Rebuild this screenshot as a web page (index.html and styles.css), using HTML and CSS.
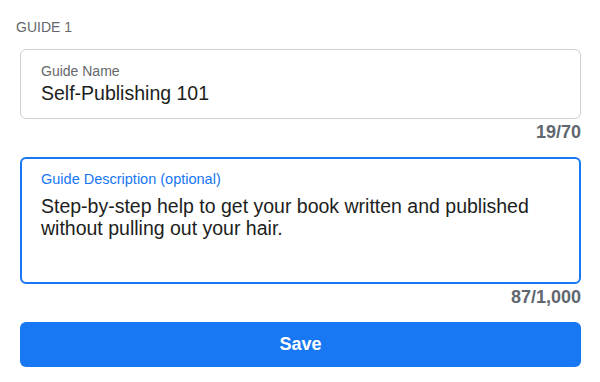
FILE: index.html
```html
<!DOCTYPE html>
<html lang="en">
<head>
    <meta charset="UTF-8">
    <title>Guide 1</title>
    <link rel="stylesheet" href="styles.css">
</head>
<body>
    <div class="guide">
        <h2 class="guide-heading">GUIDE 1</h2>

        <div class="field">
            <label class="field-box">
                <span class="field-label">Guide Name</span>
                <span class="field-value">Self-Publishing 101</span>
            </label>
            <div class="field-count">19/70</div>
        </div>

        <div class="field">
            <label class="field-box field-box-active field-box-tall">
                <span class="field-label">Guide Description (optional)</span>
                <span class="field-value">Step-by-step help to get your book written and published without pulling out your hair.</span>
            </label>
            <div class="field-count">87/1,000</div>
        </div>

        <button class="save-btn">Save</button>
    </div>
</body>
</html>
```

FILE: styles.css
```css
body {
    margin: 0;
    background: #fff;
    font-family: 'Liberation Sans', Arial, sans-serif;
    color: #1c1e21;
}

.guide {
    padding: 19px 19px 0 20px;
}

.guide-heading {
    margin: 0 0 14px -4px;
    font-size: 14px;
    font-weight: normal;
    line-height: 16px;
    color: #65676b;
}

.field {
    margin-bottom: 15px;
}

.field-box {
    display: flex;
    flex-direction: column;
    box-sizing: border-box;
    height: 70px;
    padding: 13px 20px 0;
    border: 1px solid #ccd0d5;
    border-radius: 6px;
}

.field-box-active {
    border: 2px solid #1877f2;
    padding: 12px 19px 0;
}

.field-box-tall {
    height: 127px;
}

.field-label {
    font-size: 14px;
    line-height: 16px;
    color: #65676b;
}

.field-box-active .field-label {
    color: #1877f2;
    font-size: 14.5px;
}

.field-value {
    margin-top: 3px;
    font-size: 19.5px;
    line-height: 22px;
}

.field-box-tall .field-value {
    margin-top: 8px;
}

.field-count {
    margin-top: 3px;
    text-align: right;
    font-size: 18px;
    font-weight: bold;
    line-height: 20px;
    color: #606770;
}

.save-btn {
    display: block;
    width: 100%;
    height: 45px;
    margin-top: 1px;
    border: none;
    border-radius: 6px;
    background: #1877f2;
    color: #fff;
    font-family: inherit;
    font-size: 18px;
    font-weight: bold;
}
```
